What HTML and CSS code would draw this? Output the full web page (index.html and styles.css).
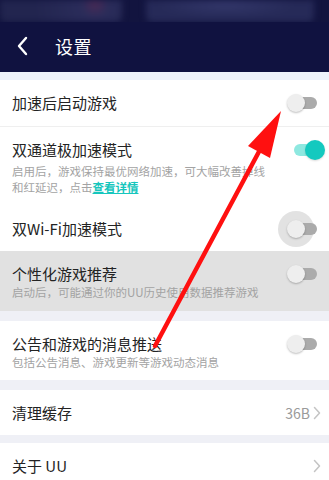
FILE: index.html
```html
<!DOCTYPE html>
<html lang="zh">
<head>
<meta charset="utf-8">
<link rel="stylesheet" href="styles.css">
</head>
<body>
<div class="page">
  <div class="topstrip">
    <div class="blur blur-left"></div>
    <div class="blur blur-right"></div>
  </div>
  <div class="header">
    <svg class="back" width="12" height="20" viewBox="0 0 12 20"><polyline points="9,2 2,10 9,18" fill="none" stroke="#fff" stroke-width="2.4" stroke-linecap="round" stroke-linejoin="round"/></svg>
    <span class="title">设置</span>
  </div>
  <div class="gap gap-top"></div>
  <div class="group">
    <div class="row row-simple row-line">
      <span class="label">加速后启动游戏</span>
      <span class="toggle"></span>
    </div>
    <div class="row row-desc row-dual">
      <div class="texts">
        <div class="label">双通道极加速模式</div>
        <div class="desc narrow">启用后，游戏保持最优网络加速，可大幅改善掉线和红延迟，点击<span class="link">查看详情</span></div>
      </div>
      <span class="toggle on"></span>
    </div>
    <div class="row row-simple row-wifi">
      <span class="label">双Wi-Fi加速模式</span>
      <span class="toggle ripple"><i class="halo"></i></span>
    </div>
    <div class="row row-desc pressed">
      <div class="texts">
        <div class="label">个性化游戏推荐</div>
        <div class="desc">启动后，可能通过你的UU历史使用数据推荐游戏</div>
      </div>
      <span class="toggle"></span>
    </div>
  </div>
  <div class="gap"></div>
  <div class="group">
    <div class="row row-desc">
      <div class="texts">
        <div class="label">公告和游戏的消息推送</div>
        <div class="desc">包括公告消息、游戏更新等游戏动态消息</div>
      </div>
      <span class="toggle"></span>
    </div>
  </div>
  <div class="gap"></div>
  <div class="group">
    <div class="row row-nav">
      <span class="label">清理缓存</span>
      <span class="value">36B</span>
      <svg class="chev" width="8" height="14" viewBox="0 0 8 14"><polyline points="1.5,1.5 6.5,7 1.5,12.5" fill="none" stroke="#c4c4c4" stroke-width="1.5" stroke-linecap="round" stroke-linejoin="round"/></svg>
    </div>
  </div>
  <div class="gap gap-small"></div>
  <div class="group">
    <div class="row row-nav">
      <span class="label">关于 UU</span>
      <svg class="chev" width="8" height="14" viewBox="0 0 8 14"><polyline points="1.5,1.5 6.5,7 1.5,12.5" fill="none" stroke="#c4c4c4" stroke-width="1.5" stroke-linecap="round" stroke-linejoin="round"/></svg>
    </div>
  </div>
  <svg class="arrow" width="329" height="480" viewBox="0 0 329 480">
    <line x1="155" y1="346" x2="262" y2="146" stroke="#ff1010" stroke-width="4.5" stroke-linecap="round"/>
    <polygon points="281,111 270,158 248,146" fill="#ff1010"/>
  </svg>
</div>
</body>
</html>
```

FILE: styles.css
```css
* { box-sizing: border-box; }
html, body { margin: 0; padding: 0; }
body {
  width: 329px;
  height: 480px;
  overflow: hidden;
  background: #ffffff;
  font-family: "Noto Sans CJK SC", "Noto Sans", sans-serif;
  color: #222;
}
.page { position: relative; width: 329px; height: 480px; overflow: hidden; }

.topstrip {
  height: 22px;
  background: #12143f;
  display: flex;
  gap: 24px;
  padding: 0 14px 0 0;
  overflow: hidden;
}
.blur {
  height: 22px;
  border-radius: 0 0 6px 6px;
  filter: blur(3px);
}
.blur-left {
  width: 122px;
  background: radial-gradient(circle at 95px 4px, #4a2a55 0, #2a2c5a 14px, #22254f 60px);
}
.blur-right {
  width: 168px;
  background: radial-gradient(ellipse at 80px 4px, #33376a 0, #262a58 70px);
}

.header {
  height: 50px;
  background: #101240;
  display: flex;
  align-items: center;
  padding: 0 0 0 17px;
}
.back { display: block; margin-top: -2px; }
.title {
  color: #fff;
  font-size: 18px;
  margin-left: 26px;
  margin-top: -2px;
  letter-spacing: 0.5px;
}

.gap { height: 10px; background: #eff0f6; }
.gap-top { height: 8px; background: #eef2fa; }
.gap-small { height: 8px; }

.group { background: #fff; }
.row {
  display: flex;
  align-items: center;
  padding: 0 10px 0 12px;
}
.row-simple { height: 46px; }
.row-line { border-bottom: 1px solid #efefef; height: 47px; }
.row-wifi { height: 46px; padding-top: 2px; }
.row-desc { padding-top: 12px; padding-bottom: 10px; align-items: flex-start; }
.row-dual { padding-bottom: 10px; }
.row-nav { height: 45px; }
.pressed { background: #e1e1e1; }

.texts { flex: 1; min-width: 0; }
.label { font-size: 15px; line-height: 22px; color: #232323; flex: 1; }
.desc { font-size: 11.5px; line-height: 15.5px; color: #a3a3a3; margin-top: 0; white-space: nowrap; }
.desc.narrow { white-space: normal; width: 256px; margin-top: 3px; line-height: 15.5px; }
.link { color: #16c6bd; text-decoration: underline; font-weight: 700; }

.toggle {
  position: relative;
  width: 32px;
  height: 20px;
  flex: none;
}
.row-desc .toggle { margin-top: 1px; }
.toggle::before {
  content: "";
  position: absolute;
  left: 9px;
  top: 4px;
  width: 21px;
  height: 12px;
  border-radius: 6px;
  background: #ababab;
}
.toggle::after {
  content: "";
  position: absolute;
  left: 0;
  top: 1px;
  width: 18px;
  height: 18px;
  border-radius: 50%;
  background: #eeeeee;
  box-shadow: 0 1px 2px rgba(0,0,0,0.25);
}
.toggle.on::before { background: #8ee8e0; left: 7px; width: 24px; }
.toggle.on::after {
  left: 18px;
  top: 0;
  width: 20px;
  height: 20px;
  background: #14c9bf;
  box-shadow: 0 1px 2px rgba(0,0,0,0.15);
}
.toggle.ripple { z-index: 0; }
.halo {
  position: absolute;
  left: -9px;
  top: -8px;
  width: 36px;
  height: 36px;
  border-radius: 50%;
  background: #e2e2e2;
  z-index: -1;
}

.value { font-size: 14px; color: #9a9a9a; margin-right: 3px; }
.chev { display: block; margin-right: -2px; }

.arrow {
  position: absolute;
  left: 0;
  top: 0;
  pointer-events: none;
}
```
